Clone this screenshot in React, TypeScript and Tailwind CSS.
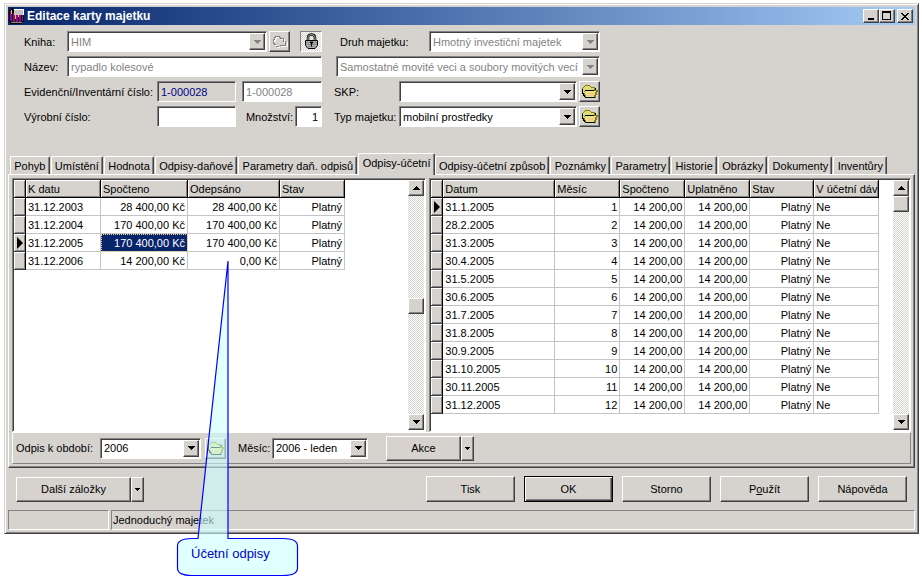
import type { ReactNode } from "react";
import clsx from "clsx";

const RAISED =
  "bg-[#d6d3ce] border border-t-white border-l-white border-r-[#424142] border-b-[#424142] shadow-[inset_-1px_-1px_0_#848284]";
const SUNKEN =
  "border border-t-[#848284] border-l-[#848284] border-r-white border-b-white shadow-[inset_1px_1px_0_#424142]";
const CHECKER =
  "bg-[repeating-conic-gradient(#ffffff_0_25%,#d6d3ce_0_50%)] bg-[length:2px_2px]";

interface Column {
  label: string;
  width: string;
  align?: "right";
}

const yearColumns: Column[] = [
  { label: "K datu", width: "w-[75px]" },
  { label: "Spočteno", width: "w-[87px]", align: "right" },
  { label: "Odepsáno", width: "w-[92px]", align: "right" },
  { label: "Stav", width: "w-[65px]", align: "right" },
];

const yearRows = [
  ["31.12.2003", "28 400,00 Kč", "28 400,00 Kč", "Platný"],
  ["31.12.2004", "170 400,00 Kč", "170 400,00 Kč", "Platný"],
  ["31.12.2005", "170 400,00 Kč", "170 400,00 Kč", "Platný"],
  ["31.12.2006", "14 200,00 Kč", "0,00 Kč", "Platný"],
];

const monthColumns: Column[] = [
  { label: "Datum", width: "w-[112px]" },
  { label: "Měsíc", width: "w-[65px]", align: "right" },
  { label: "Spočteno", width: "w-[65px]", align: "right" },
  { label: "Uplatněno", width: "w-[65px]", align: "right" },
  { label: "Stav", width: "w-[64px]", align: "right" },
  { label: "V účetní dáv", width: "w-[65px]" },
];

const monthRows = [
  "31.1.2005",
  "28.2.2005",
  "31.3.2005",
  "30.4.2005",
  "31.5.2005",
  "30.6.2005",
  "31.7.2005",
  "31.8.2005",
  "30.9.2005",
  "31.10.2005",
  "30.11.2005",
  "31.12.2005",
].map((date, i) => [date, String(i + 1), "14 200,00", "14 200,00", "Platný", "Ne"]);

const tabs = [
  "Pohyb",
  "Umístění",
  "Hodnota",
  "Odpisy-daňové",
  "Parametry daň. odpisů",
  "Odpisy-účetní",
  "Odpisy-účetní způsob",
  "Poznámky",
  "Parametry",
  "Historie",
  "Obrázky",
  "Dokumenty",
  "Inventůry",
];

function Arrow({ up, color = "#000000" }: { up?: boolean; color?: string }) {
  return (
    <svg width="7" height="4" viewBox="0 0 7 4" shapeRendering="crispEdges">
      <path d={up ? "M3 0h1v1h1v1h1v1h1v1H0V3h1V2h1V1h1z" : "M0 0h7v1H6v1H5v1H4v1H3V3H2V2H1V1H0z"} fill={color} />
    </svg>
  );
}

function FolderIcon({ disabled }: { disabled?: boolean }) {
  if (disabled) {
    return (
      <svg width="17" height="15" viewBox="0 0 17 15" fill="none" shapeRendering="crispEdges">
        <path d="M4.500 10.500H3.500V9.500H2.500V5.500H3.500V3.500H4.500V2.500H8.500V3.500H9.500V4.500H12.500V7.500M15.500 7V12M5 12.500H8M9 11.500H14" stroke="#ffffff" transform="translate(1 1)" />
        <path d="M4.500 10.500H3.500V9.500H2.500V5.500H3.500V3.500H4.500V2.500H8.500V3.500H9.500V4.500H12.500V7.500M14.500 7V12M5 12.500H8M9 11.500H14" stroke="#848284" />
      </svg>
    );
  }
  return (
    <svg width="17" height="15" viewBox="0 0 17 15" shapeRendering="crispEdges">
      <path d="M4 1H9V2H10V3H14V6H17V8H16V11H15V14H4V13H3V12H2V10H1V4H2V3H3V2H4Z" fill="#848200" />
      <path d="M4 2H9V3H10V4H13V6H4V7H3V9H2V4H3V3H4Z" fill="#dedb7b" />
      <path d="M4 7H15V8H14V11H13V13H5V11H4V9H3V8H4Z" fill="#e7e384" />
      <path d="M7 9H13V11H12V12H6V11H7Z" fill="#efcb8c" />
      <path d="M1 5H2V9H3V11H4V13H14V14H4V13H3V12H2V10H1ZM14 4H15V6H14ZM4 6H13V7H4Z" fill="#000000" />
    </svg>
  );
}

function LockIcon() {
  return (
    <svg width="15" height="17" viewBox="0 0 15 17">
      <path d="M4 8V4.500C4 2.500 5.500 1.500 7.500 1.500S11 2.500 11 4.500V8" fill="none" stroke="#000000" strokeWidth="2.6" />
      <path d="M4 8V4.500C4 2.700 5.500 1.600 7.500 1.600S11 2.700 11 4.500V8" fill="none" stroke="#d6d3ce" strokeWidth="0.9" />
      <path d="M1.500 7.500H13.500V12.500L11 15.500H4L1.500 12.500Z" fill="#b5b2b5" stroke="#000000" />
      <path d="M2 9.500H13M2 11.500H13M4 13.500H11" stroke="#848284" />
      <path d="M6 8.500H9V10.500H8V13.500H7V10.500H6Z" fill="#000000" />
    </svg>
  );
}

function AppIcon() {
  return (
    <svg width="18" height="16" viewBox="0 0 18 16" shapeRendering="crispEdges">
      <path d="M1 2H3V0H5V2H16V14H14V16H2V14H1Z" fill="#000000" />
      <path d="M2 3H4V13H2ZM5 5H7V14H5ZM8 7H10V14H8ZM11 7H13V14H11ZM14 7H15V13H14Z" fill="#9c009c" />
      <path d="M6 1H16V7H6Z" fill="#c6c3c6" />
      <path d="M6 1H16V2H6ZM15 2H16V7H15Z" fill="#ffffff" />
      <path d="M3 2H4V6H3ZM7 7H8V11H7ZM10 7H11V9H10Z" fill="#f7cf00" />
      <path d="M3 14H14V15H3Z" fill="#848284" />
    </svg>
  );
}

interface FieldProps {
  id: string;
  value: string;
  disabled?: boolean;
  className?: string;
  label?: string;
}

function Combo({ id, value, disabled, className, label }: FieldProps) {
  return (
    <div className={clsx("flex h-[21px] bg-white p-px", SUNKEN, className)}>
      <select
        id={id}
        aria-label={label}
        disabled={disabled}
        className={clsx(
          "min-w-0 flex-1 appearance-none bg-transparent pl-0.5 leading-4 opacity-100 outline-none",
          disabled ? "text-[#848284]" : "text-black"
        )}
      >
        <option>{value}</option>
      </select>
      <span className={clsx("pointer-events-none flex w-4 shrink-0 items-center justify-center", RAISED)}>
        <Arrow color={disabled ? "#848284" : undefined} />
      </span>
    </div>
  );
}

function IconButton({ label, children, disabled }: { label: string; children: ReactNode; disabled?: boolean }) {
  return (
    <button
      type="button"
      aria-label={label}
      disabled={disabled}
      className={clsx("flex h-[21px] w-[21px] shrink-0 items-center justify-center", RAISED)}
    >
      {children}
    </button>
  );
}

function TextField({ id, value, className, disabled, label }: FieldProps) {
  return (
    <input
      id={id}
      aria-label={label}
      defaultValue={value}
      disabled={disabled}
      className={clsx("h-[21px] min-w-0 px-[3px] outline-none", SUNKEN, className)}
    />
  );
}

/**
 * Push button with a separate drop-down part on the right
 */
function SplitButton({ label, className }: { label: string; className: string }) {
  return (
    <div className="flex h-[25px]">
      <button type="button" className={clsx(RAISED, className)}>
        {label}
      </button>
      <button type="button" aria-label={`${label} - nabídka`} className={clsx("flex w-[13px] items-center justify-center", RAISED)}>
        <svg width="5" height="3" viewBox="0 0 5 3" shapeRendering="crispEdges">
          <path d="M0 0h5v1H4v1H3v1H2V2H1V1H0z" />
        </svg>
      </button>
    </div>
  );
}

function ScrollBar({ thumbOffset }: { thumbOffset: string }) {
  return (
    <div className={clsx("flex w-4 shrink-0 flex-col", CHECKER)}>
      <button type="button" aria-label="Nahoru" className={clsx("flex h-4 items-center justify-center", RAISED)}>
        <Arrow up />
      </button>
      <div className={clsx("flex-1", thumbOffset)}>
        <div className={clsx("h-4", RAISED)} />
      </div>
      <button type="button" aria-label="Dolů" className={clsx("flex h-4 items-center justify-center", RAISED)}>
        <Arrow />
      </button>
    </div>
  );
}

interface DataGridProps {
  columns: Column[];
  rows: string[][];
  current: number;
  selectedColumn?: number;
  thumbOffset: string;
  className: string;
}

function DataGrid({ columns, rows, current, selectedColumn, thumbOffset, className }: DataGridProps) {
  const headCell =
    "h-[18px] bg-[#d6d3ce] border-r border-b border-black shadow-[inset_1px_1px_0_#ffffff,inset_-1px_-1px_0_#848284]";
  const markerCell =
    "h-[18px] bg-[#d6d3ce] border-r border-b border-r-black border-b-[#424142] shadow-[inset_1px_1px_0_#ffffff,inset_-1px_-1px_0_#848284]";

  return (
    <div className={clsx("flex h-[254px] min-w-0 justify-between bg-white p-px", SUNKEN, className)}>
      <div className="min-w-0 overflow-hidden">
        <table className="table-fixed border-separate border-spacing-0">
          <thead>
            <tr>
              <th className={clsx("w-3", headCell)} />
              {columns.map((col) => (
                <th
                  key={col.label}
                  className={clsx("overflow-hidden p-0 pl-0.5 text-left font-normal whitespace-nowrap", headCell, col.width)}
                >
                  {col.label}
                </th>
              ))}
            </tr>
          </thead>
          <tbody>
            {rows.map((row, r) => (
              <tr key={row[0]}>
                <td className={clsx("p-0", markerCell)}>
                  {r === current && (
                    <svg className="ml-0.5" width="7" height="12" viewBox="0 0 7 12">
                      <path d="M1 0L7 6L1 12Z" />
                    </svg>
                  )}
                </td>
                {row.map((cell, c) => (
                  <td
                    key={c}
                    className={clsx(
                      "h-[18px] border-r border-b border-[#c6c3c6] p-0 whitespace-nowrap",
                      columns[c].align === "right" ? "pr-0.5 text-right" : "pl-0.5",
                      r === current &&
                        c === selectedColumn &&
                        "bg-[#08246b] text-white outline-1 -outline-offset-1 outline-dotted outline-[#f7db94]"
                    )}
                  >
                    {cell}
                  </td>
                ))}
              </tr>
            ))}
          </tbody>
        </table>
      </div>
      <ScrollBar thumbOffset={thumbOffset} />
    </div>
  );
}

function TitleBar() {
  const control = clsx("flex h-3.5 w-4 items-center justify-center", RAISED);

  return (
    <header className="flex h-[18px] items-center bg-linear-to-r from-[#08246b] to-[#a5cbf7] pr-0.5">
      <AppIcon />
      <h1 className="flex-1 pl-px text-[12px] font-bold text-white">Editace karty majetku</h1>
      <button type="button" aria-label="Minimalizovat" className={control}>
        <svg width="10" height="10" viewBox="0 0 10 10" shapeRendering="crispEdges">
          <path d="M2 7H8V9H2Z" />
        </svg>
      </button>
      <button type="button" aria-label="Maximalizovat" className={control}>
        <svg width="10" height="10" viewBox="0 0 10 10" shapeRendering="crispEdges">
          <path d="M0 0H9V9H0ZM1 2V8H8V2Z" fillRule="evenodd" />
        </svg>
      </button>
      <button type="button" aria-label="Zavřít" className={clsx("ml-0.5", control)}>
        <svg width="8" height="7" viewBox="0 0 8 7" shapeRendering="crispEdges">
          <path d="M0 0H2V1H3V2H5V1H6V0H8V1H7V2H6V3H5V4H6V5H7V6H8V7H6V6H5V5H3V6H2V7H0V6H1V5H2V4H3V3H2V2H1V1H0Z" />
        </svg>
      </button>
    </header>
  );
}

function AssetForm() {
  const row = "flex h-[21px] items-center";

  return (
    <form className="flex gap-3 pt-1.5 pl-4">
      <div className="flex w-[298px] flex-col gap-1">
        <div className={row}>
          <label htmlFor="kniha" className="w-[43px]">Kniha:</label>
          <Combo id="kniha" value="HIM" disabled className="mr-0.5 w-[200px]" />
          <IconButton label="Vybrat knihu" disabled>
            <FolderIcon disabled />
          </IconButton>
          <button
            type="button"
            aria-label="Zamknout"
            className={clsx(
              "ml-auto flex h-[21px] w-[22px] items-center justify-center border border-t-[#848284] border-l-[#848284] border-r-white border-b-white",
              CHECKER
            )}
          >
            <LockIcon />
          </button>
        </div>
        <div className={row}>
          <label htmlFor="nazev" className="w-[43px]">Název:</label>
          <TextField id="nazev" value="rypadlo kolesové" disabled className="flex-1 bg-white text-[#848284]" />
        </div>
        <div className={row}>
          <label htmlFor="evidencni" className="w-[133px]">Evidenční/Inventární číslo:</label>
          <TextField id="evidencni" value="1-000028" className="mr-1.5 w-[79px] text-[#000084]" />
          <TextField
            id="inventarni"
            label="Inventární číslo"
            value="1-000028"
            disabled
            className="flex-1 bg-white text-[#848284]"
          />
        </div>
        <div className={row}>
          <label htmlFor="vyrobni" className="w-[133px]">Výrobní číslo:</label>
          <TextField id="vyrobni" value="" className="w-[79px] bg-white" />
          <label htmlFor="mnozstvi" className="flex-1 pr-0.5 text-right">Množství:</label>
          <TextField id="mnozstvi" value="1" className="w-[27px] bg-white text-right" />
        </div>
      </div>
      <div className="flex w-[266px] flex-col gap-1">
        <div className={row}>
          <label htmlFor="druh" className="flex-1 pl-1.5">Druh majetku:</label>
          <Combo id="druh" value="Hmotný investiční majetek" disabled className="w-[171px]" />
        </div>
        <div className={row}>
          <Combo
            id="skupina"
            label="Skupina majetku"
            value="Samostatné movité veci a soubory movitých vecí"
            disabled
            className="ml-0.5 flex-1"
          />
        </div>
        <div className={row}>
          <label htmlFor="skp" className="w-[65px]">SKP:</label>
          <Combo id="skp" value="" className="mr-0.5 flex-1" />
          <IconButton label="Vybrat SKP">
            <FolderIcon />
          </IconButton>
        </div>
        <div className={row}>
          <label htmlFor="typ" className="w-[65px] whitespace-nowrap">Typ majetku:</label>
          <Combo id="typ" value="mobilní prostředky" className="mr-0.5 flex-1" />
          <IconButton label="Vybrat typ">
            <FolderIcon />
          </IconButton>
        </div>
      </div>
    </form>
  );
}

function TabStrip({ active }: { active: string }) {
  return (
    <div role="tablist" className="mr-[27px] flex items-end pt-[26px] pl-0.5">
      {tabs.map((tab) => (
        <button
          key={tab}
          type="button"
          role="tab"
          aria-selected={tab === active}
          className={clsx(
            "flex-auto rounded-t-xs border border-b-0 border-t-white border-l-white border-r-[#424142] bg-[#d6d3ce] whitespace-nowrap shadow-[inset_-1px_0_0_#848284]",
            tab === active ? "-mb-px h-[22px] pb-1" : "mr-px h-[18px]"
          )}
        >
          {tab}
        </button>
      ))}
    </div>
  );
}

function Callout() {
  return (
    <div className="pointer-events-none absolute top-[260px] left-[176px] h-[318px] w-[124px]">
      <svg className="absolute inset-0" width="124" height="318" viewBox="0 0 124 318">
        <path
          d="M52 1V278.500H107Q121.500 278.500 121.500 286V308Q121.500 315.500 107 315.500H16Q1.500 315.500 1.500 308V286Q1.500 278.500 16 278.500H22Z"
          fill="#ccffff"
          fillOpacity="0.6"
          stroke="#0000ff"
          strokeWidth="1.2"
        />
      </svg>
      <p className="absolute top-[286px] left-[15px] text-[13px] leading-4 text-[#0000c6]">Účetní odpisy</p>
    </div>
  );
}

export default function App() {
  const action = "h-[26px] w-[89px]";

  return (
    <div className="relative min-h-screen bg-white pt-[3px] pr-[3px] pl-1 font-['Liberation_Sans',Arial,sans-serif] text-[11px] leading-[14px] text-black">
      <main className="border border-t-[#d6d3ce] border-l-[#d6d3ce] border-r-[#424142] border-b-[#424142] bg-[#d6d3ce] p-[3px] shadow-[inset_1px_1px_0_#ffffff,inset_-1px_-1px_0_#848284]">
        <TitleBar />
        <AssetForm />
        <TabStrip active="Odpisy-účetní" />

        <section className="border border-t-white border-l-white border-r-[#424142] border-b-[#424142] p-[3px] shadow-[inset_-1px_-1px_0_#848284]">
          <div className="flex gap-[3px]">
            <DataGrid
              columns={yearColumns}
              rows={yearRows}
              current={2}
              selectedColumn={1}
              thumbOffset="pt-[102px]"
              className="flex-[414]"
            />
            <DataGrid
              columns={monthColumns}
              rows={monthRows}
              current={0}
              thumbOffset="pt-0"
              className="flex-[482]"
            />
          </div>
          <div className="flex h-8 items-center border border-t-white border-l-white border-r-[#848284] border-b-[#848284] pl-[3px]">
            <label htmlFor="obdobi" className="w-[84px]">Odpis k období:</label>
            <Combo id="obdobi" value="2006" className="mr-1 w-[101px]" />
            <IconButton label="Vybrat období">
              <FolderIcon />
            </IconButton>
            <label htmlFor="mesic" className="ml-3 w-[34px]">Měsíc:</label>
            <Combo id="mesic" value="2006 - leden" className="mr-[18px] w-24" />
            <SplitButton label="Akce" className="w-[75px]" />
          </div>
        </section>

        <div className="flex items-center justify-between p-2">
          <SplitButton label="Další záložky" className="w-[115px]" />
          <div className="flex gap-[9px]">
            <button type="button" className={clsx(action, RAISED)}>Tisk</button>
            <button type="button" className={clsx(action, "bg-[#d6d3ce] border border-black shadow-[inset_1px_1px_0_#ffffff,inset_-1px_-1px_0_#424142,inset_-2px_-2px_0_#848284]")}>
              OK
            </button>
            <button type="button" className={clsx(action, RAISED)}>Storno</button>
            <button type="button" className={clsx(action, RAISED)}>
              P<u>o</u>užít
            </button>
            <button type="button" className={clsx(action, RAISED)}>Nápověda</button>
          </div>
        </div>

        <footer className="flex h-5 gap-0.5">
          <div className="w-[101px] border border-t-[#848284] border-l-[#848284] border-r-white border-b-white" />
          <div className="flex-1 border border-t-[#848284] border-l-[#848284] border-r-white border-b-white pt-0.5 pl-px">
            Jednoduchý majetek
          </div>
        </footer>
      </main>
      <Callout />
    </div>
  );
}
